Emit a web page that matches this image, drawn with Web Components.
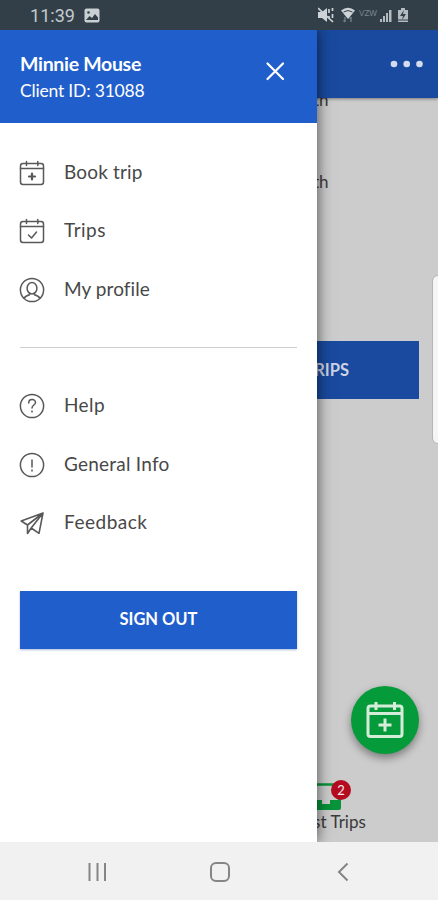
<!DOCTYPE html>
<html lang="en">
<head>
<meta charset="utf-8">
<title>Trips</title>
<style>
html, body { margin: 0; height: 900px; overflow: hidden; }
body { font-family: Lato, "Open Sans", sans-serif; }
</style>
</head>
<body>
<phone-screen></phone-screen>
<script>
function define(name, html, setup) {
  const template = document.createElement('template');
  template.innerHTML = html;
  customElements.define(name, class extends HTMLElement {
    connectedCallback() {
      if (this.shadowRoot) return;
      this.attachShadow({ mode: 'open' }).append(template.content.cloneNode(true));
      if (setup) setup(this, this.shadowRoot);
    }
  });
}

const calendar = '<rect x="1.500" y="3.500" width="23" height="21" rx="2.500"/><path d="M1.500 8.500h23M7.500 1.500v4M18.800 1.500v4"/>';
const icons = {
  book: calendar + '<path d="M13 13.500v6M10 16.500h6" stroke-width="2.200"/>',
  trips: calendar + '<path d="M9.500 17l3 3 5-6"/>',
  profile: '<circle cx="13" cy="13" r="11.600"/><ellipse cx="13" cy="11.200" rx="4.900" ry="5.700"/><path d="M5 21.300c1-2 3-2.700 5.500-3.500v-2M21 21.300c-1-2-3-2.700-5.500-3.500v-2"/>',
  help: '<circle cx="13" cy="13" r="11.600"/><path d="M9.700 10c0-4.600 6.800-4.400 6.800-.6 0 2.600-3.500 2.600-3.500 5.600"/><path d="M13 18v1"/>',
  info: '<circle cx="13" cy="13" r="11.600"/><path d="M13 8v7M13 18v1"/>',
  send: '<path d="M24 3L2.200 11l6.300 4L24 3L20 23.300l-7.800-5.300zM8.500 15v8.500l3.700-5.500" stroke-width="1.600"/>'
};

/* Single line of text whose tracking is adjusted to fill the width given by "w". */
define('fit-text', `<style>:host{display:inline-block;white-space:pre}span{display:inline-block}</style><span><slot></slot></span>`,
  (host, root) => {
    const span = root.querySelector('span');
    const extra = (Number(host.getAttribute('w')) - span.getBoundingClientRect().width) / host.textContent.length;
    span.style.letterSpacing = extra.toFixed(3) + 'px';
  });

define('menu-icon', `<style>:host{display:block;width:26px;height:26px}svg{display:block;overflow:visible}</style>
<svg width="26" height="26" viewBox="0 0 26 26" fill="none" stroke="#585858" stroke-width="1.500" stroke-linejoin="round" stroke-linecap="round"></svg>`,
  (host, root) => { root.querySelector('svg').innerHTML = icons[host.getAttribute('name')]; });

define('menu-row', `<style>
:host{display:flex;align-items:center;height:58.500px;gap:19px;padding-left:19px;color:#484848;font-size:19px;line-height:26px}
fit-text{position:relative;top:-1px}</style>
<menu-icon></menu-icon><fit-text></fit-text>`,
  (host, root) => {
    const icon = document.createElement('menu-icon');
    icon.setAttribute('name', host.getAttribute('icon'));
    root.querySelector('menu-icon').replaceWith(icon);
    const text = document.createElement('fit-text');
    text.setAttribute('w', host.getAttribute('w'));
    text.textContent = host.textContent;
    root.querySelector('fit-text').replaceWith(text);
  });

define('status-bar', `<style>
:host{display:flex;align-items:center;height:30px;box-sizing:border-box;padding:0 28px 0 30px;background:#333f48;color:#c3cacf;font:18px/30px Roboto,sans-serif}
.grow{flex:1}svg{display:block}.img{margin-left:9px}
fit-text{position:relative;top:.5px}
</style>
<fit-text w="45">11:39</fit-text>
<svg class="img" width="16" height="15" viewBox="0 0 16 15"><rect x=".5" y=".5" width="15" height="14" rx="2" fill="#c9d0d4"/><path d="M2 12l3.500-4 2.500 2 3-4 3 3.500V12z" fill="#333f48"/><circle cx="4.500" cy="4.500" r="1.300" fill="#333f48"/></svg>
<div class="grow"></div>
<svg width="92" height="20" viewBox="0 0 92 20" fill="#cdd3d6">
<path d="M0 7h4l5-4v14l-5-4H0z"/><path d="M0 3l15 14M11 4v4M14.500 3v3M11 11v3M14.500 9v4" stroke="#cdd3d6" stroke-width="1.700"/>
<path d="M23 5.500q7-5.500 14 0L30 14z"/><path d="M25.500 7q4.500-3 9 0" fill="none" stroke="#333f48"/><path d="M27 12v5M25.500 15.500l1.500 1.500M33 17v-5M31.500 13.500L33 12" stroke="#77828a" fill="none" stroke-width="1.300"/>
<text x="41" y="10.500" font-size="8.500" font-family="Liberation Sans" fill="#7b868e" textLength="18" lengthAdjust="spacingAndGlyphs">VZW</text>
<path d="M62 14h2v3h-2zM65 11h2v6h-2zM68 8h2v9h-2zM71 5h2.500v12H71z" fill="#b3bbc0"/>
<path d="M83 3h4v2h3v12h-10V5h3z" fill="#b3bbc0"/><path d="M86 5l-4 6h3l-1 4 4-6h-3z" fill="#333f48"/><path d="M80 15h10" stroke="#333f48"/></svg>`);

define('side-drawer', `<style>
:host{display:flex;flex-direction:column;width:317px;height:812px;background:#fff;box-shadow:0 0 14px rgba(0,0,0,.65)}
header{display:flex;justify-content:space-between;height:93px;box-sizing:border-box;padding:21px 31px 0 20px;background:#205ecb;color:#fff}
.name{display:flex;flex-direction:column;align-items:flex-start}
.n{font-size:19.500px;font-weight:700;line-height:26px}.c{font-size:17.500px;line-height:28px}
header svg{margin-top:9px}
.one{margin-top:20.500px}
hr{width:277px;height:1px;border:0;background:#cfcfcf;margin:27.500px 0 29.500px 20px;flex:none}
button{margin:38px 0 0 20px;width:277px;height:58.500px;padding:0 0 2px;border:0;background:#205ecb;color:#fff;font:700 16.500px/20px Lato,sans-serif;box-shadow:0 1px 2px rgba(20,60,150,.35)}
</style>
<header><div class="name"><fit-text class="n" w="121">Minnie Mouse</fit-text><fit-text class="c" w="124.500">Client ID: 31088</fit-text></div>
<svg width="22" height="22" viewBox="0 0 22 22" stroke="#fff" stroke-width="2.200" stroke-linecap="round"><path d="M3.500 3.500l15.500 15.500M19 3.500L3.500 19"/></svg></header>
<nav class="one"><menu-row icon="book" w="78.500">Book trip</menu-row><menu-row icon="trips" w="42">Trips</menu-row><menu-row icon="profile" w="85.500">My profile</menu-row></nav>
<hr>
<nav><menu-row icon="help" w="41">Help</menu-row><menu-row icon="info" w="105.500">General Info</menu-row><menu-row icon="send" w="83.500">Feedback</menu-row></nav>
<button><fit-text w="78">SIGN OUT</fit-text></button>`);

define('trip-page', `<style>
:host{display:flex;flex-direction:column;align-items:flex-end;height:812px;background:#ccc;color:#3a3a3a}
header{width:100%;height:67.500px;background:#194a9f;box-shadow:0 1px 3px rgba(0,0,0,.4);display:flex;align-items:center;justify-content:flex-end;box-sizing:border-box;padding-right:13.500px;z-index:1}
.line{font-size:17px;line-height:24px;margin-right:109.500px}
.a{margin-top:-9.500px}.b{margin-top:58px}
.cta{margin:147.300px 19px 0 0;width:399px;height:58.200px;box-sizing:border-box;padding-right:70px;background:#194a9f;color:#ccd2e2;font-size:16.500px;font-weight:700;line-height:58.500px;text-align:right}
.fab{margin:286.500px 19px 0 0;width:68px;height:68px;border-radius:50%;background:#059b3a;box-shadow:0 4px 8px rgba(0,0,0,.4);display:grid;place-items:center}
.tab{margin:26.500px 72px 0 0;display:flex;flex-direction:column;align-items:flex-end;font-size:17px}
.pic{position:relative;width:60px;height:31.500px;margin-right:14px}
.badge{position:absolute;left:39px;top:-.5px;width:20px;height:20px;border-radius:50%;background:#b40b20;color:#eee;font-size:13px;line-height:20px;text-align:center}
.tab fit-text{line-height:20px}
</style>
<header><svg width="36" height="8" viewBox="0 0 36 8" fill="#d5dced"><circle cx="5" cy="4" r="3.300"/><circle cx="17.700" cy="4" r="3.300"/><circle cx="30.500" cy="4" r="3.300"/></svg></header>
<div class="line a">th</div><div class="line b">th</div>
<div class="cta">TRIPS</div>
<div class="fab"><svg width="38" height="38" viewBox="0 0 38 38" fill="none" stroke="#d5ecd9" stroke-width="3"><rect x="2" y="5" width="34" height="30.500" rx="2.500"/><path d="M2 12.500h34M10 1v8M28.500 1v8M19 17.500v13M12.500 24h13"/></svg></div>
<div class="tab"><div class="pic"><svg width="50" height="31" viewBox="0 0 50 31"><path d="M10 4.500h33a4 4 0 0 1 4 4V24" fill="none" stroke="#07943a" stroke-width="2.500"/><path d="M10 20h20v4h8v-4h11v8q0 2-2 2H10z" fill="#07943a"/></svg><div class="badge">2</div></div><fit-text w="53">st Trips</fit-text></div>`);

define('nav-bar', `<style>:host{display:grid;grid-template-columns:112px 118px 36px;align-items:center;height:58px;box-sizing:border-box;padding-left:87px;column-gap:10px;background:#f1f1f1}svg{display:block;position:relative;top:1px}</style>
<svg width="22" height="22" viewBox="0 0 22 22" stroke="#858585" stroke-width="2"><path d="M2.500 2v18M10.500 2v18M18 2v18"/></svg>
<svg width="22" height="22" viewBox="0 0 22 22" fill="none" stroke="#858585" stroke-width="2"><rect x="2" y="2" width="18" height="18" rx="5"/></svg>
<svg width="14" height="22" viewBox="0 0 14 22" fill="none" stroke="#858585" stroke-width="2"><path d="M10.500 2.500L2 11l8.500 8.500"/></svg>`);

define('phone-screen', `<style>
:host{display:grid;grid-template-rows:30px 812px 58px;width:438px;height:900px}
main{position:relative;overflow:hidden}
side-drawer{position:absolute;left:0;top:0;z-index:2}
.handle{position:absolute;z-index:3;right:-6px;top:245px;width:12px;height:169px;border:1px solid #b5b5b5;border-radius:6px;background:#f5f5f5;box-sizing:border-box}
</style>
<status-bar></status-bar>
<main><trip-page></trip-page><side-drawer></side-drawer><div class="handle"></div></main>
<nav-bar></nav-bar>`);
</script>
</body>
</html>
